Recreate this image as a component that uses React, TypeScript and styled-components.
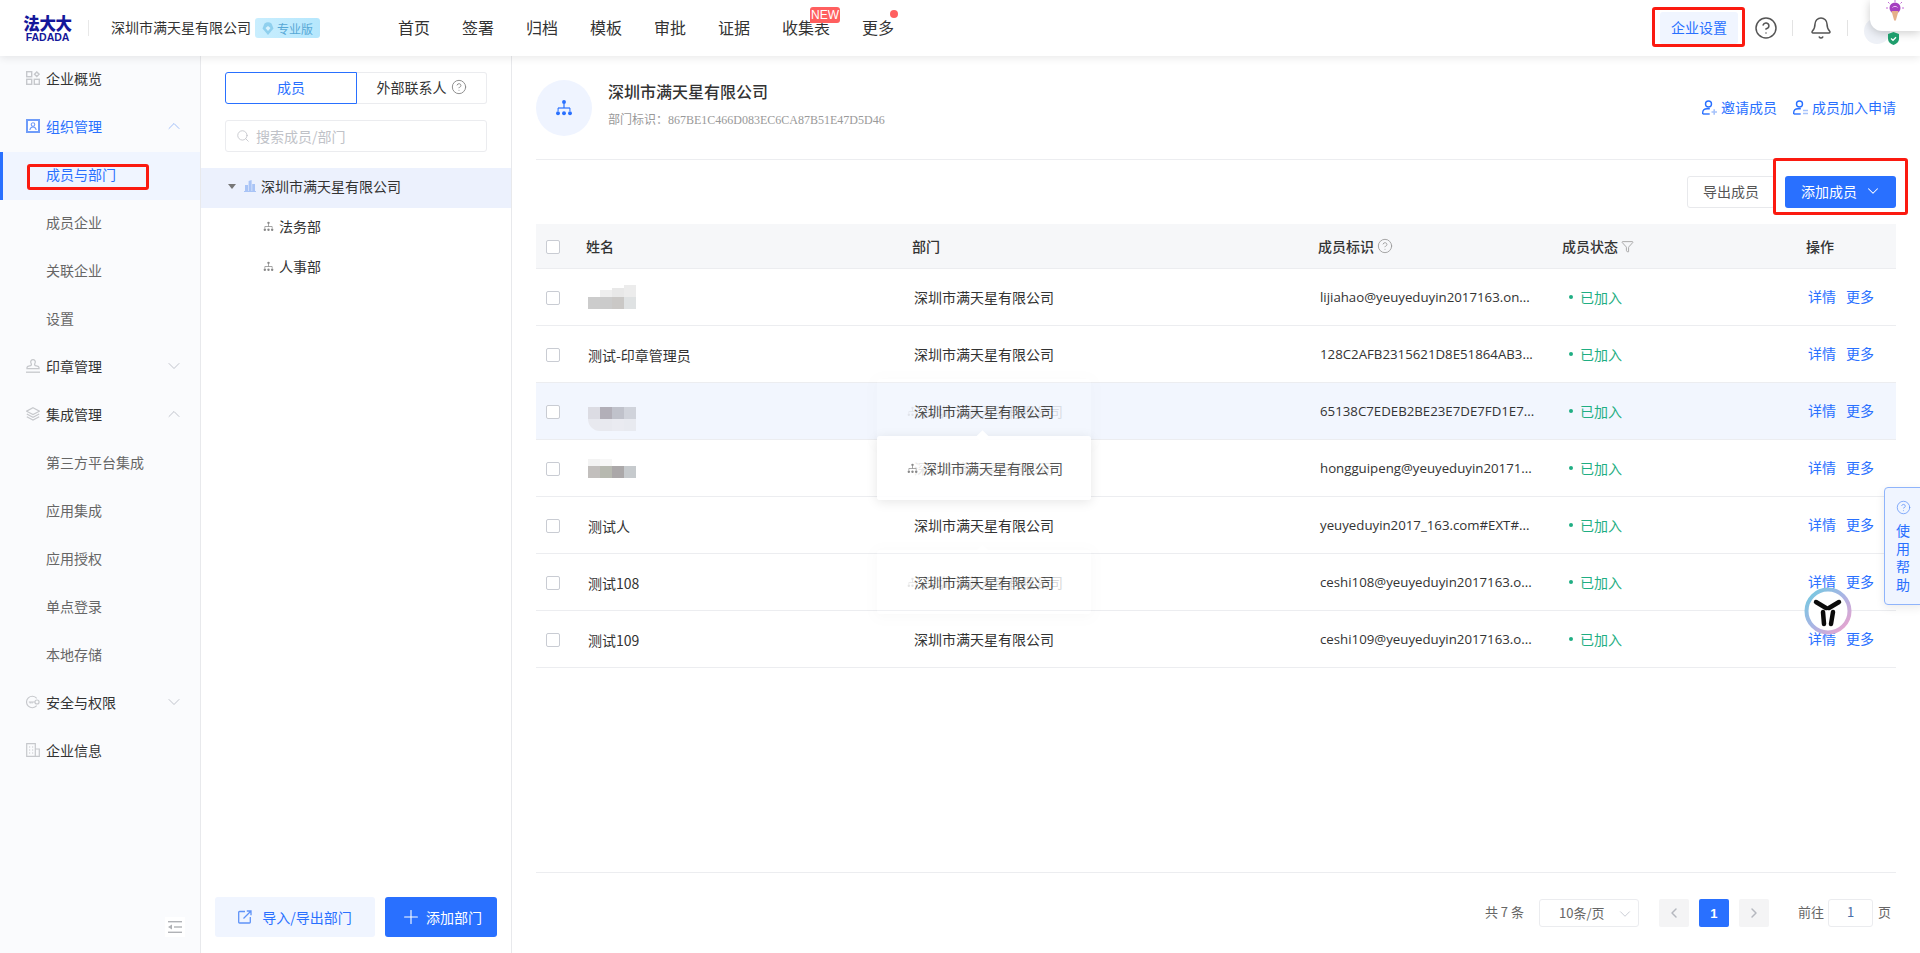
import React from 'react';
import styled, { createGlobalStyle } from 'styled-components';
import { Bell, ChevronDown, ChevronLeft, ChevronRight, ChevronUp, CircleHelp, Funnel, Plus, Search } from 'lucide-react';

const BLUE = '#2970ff';
const CJK = '"Noto Sans CJK SC", sans-serif';
const LATIN = '"Open Sans", "Noto Sans CJK SC", sans-serif';

const Global = createGlobalStyle`
  html, body { margin: 0; padding: 0; height: 100%; overflow: hidden; background: #fff; }
  #root { height: 100%; }
  * { box-sizing: border-box; }
  body { font-family: ${LATIN}; font-size: 14px; color: #333; }
`;

const Page = styled.div`
  position: relative;
  width: 1920px;
  height: 953px;
  display: flex;
  flex-direction: column;
  overflow: hidden;
`;

/* ---------- top bar ---------- */
const TopBar = styled.header`
  height: 56px;
  flex: none;
  display: flex;
  align-items: center;
  background: #fff;
  box-shadow: 0 2px 8px rgba(0, 0, 0, 0.09);
  position: relative;
  z-index: 3;
`;
const Logo = styled.div`
  width: 49px;
  margin-left: 23px;
  display: flex;
  flex-direction: column;
  align-items: center;
  color: #14179a;
  font-family: ${CJK};
`;
const LogoCn = styled.span`
  font-size: 16.5px;
  font-weight: 900;
  line-height: 17px;
  letter-spacing: -0.3px;
  white-space: nowrap;
`;
const LogoEn = styled.span`
  font-family: "Liberation Sans", sans-serif;
  font-size: 10.5px;
  font-weight: 700;
  line-height: 8px;
  margin-top: 1px;
  white-space: nowrap;
`;
const LogoSep = styled.span`
  width: 1px;
  height: 16px;
  background: #e8e8e8;
  margin: 0 22px 0 16px;
`;
const CompanyName = styled.span`
  font-family: ${CJK};
  font-size: 14px;
  color: #333;
  white-space: nowrap;
  margin-bottom: 2px;
`;
const PlanBadge = styled.span`
  margin-left: 4px;
  width: 65px;
  height: 20px;
  border-radius: 3px;
  background: linear-gradient(90deg, #c9eefe, #b5e7fd);
  display: flex;
  align-items: center;
  justify-content: center;
  gap: 3px;
  color: #57a8d6;
  font-family: ${CJK};
  font-size: 12px;
`;
const Nav = styled.nav`
  margin-left: 78px;
  margin-bottom: 2px;
  display: flex;
  gap: 32px;
`;
const NavItem = styled.span`
  position: relative;
  font-family: ${CJK};
  font-size: 16px;
  line-height: 24px;
  color: #333;
  white-space: nowrap;
`;
const NewTag = styled.span`
  position: absolute;
  left: 28px;
  top: -8px;
  width: 30px;
  height: 16px;
  background: #ff5f5f;
  border-radius: 3px 3px 3px 0;
  color: #fff;
  font-family: "Liberation Sans", sans-serif;
  font-size: 12px;
  line-height: 16px;
  text-align: center;
`;
const RedDot = styled.span`
  position: absolute;
  right: -4px;
  top: -5px;
  width: 8px;
  height: 8px;
  border-radius: 50%;
  background: #ff5f5f;
`;
const TopTools = styled.div`
  margin-left: auto;
  display: flex;
  align-items: center;
  height: 100%;
`;
const SettingsButton = styled.span`
  width: 78px;
  height: 32px;
  border-radius: 3px;
  background: #f0f5ff;
  color: ${BLUE};
  font-family: ${CJK};
  font-size: 14px;
  line-height: 31px;
  text-align: center;
`;
const ToolIcon = styled.span<{ $gap: number }>`
  display: flex;
  color: #555;
  margin-left: ${p => p.$gap}px;
`;
const ToolSep = styled.span`
  width: 1px;
  height: 16px;
  margin-left: 14px;
  background: #e3e3e3;
`;
const Avatar = styled.span`
  width: 26px;
  height: 26px;
  border-radius: 50%;
  background: #eef1f7;
  margin: 6px 0 0 16px;
`;
const AvatarRow = styled.div`
  width: 72px;
  display: flex;
  align-items: center;
`;
const TipCard = styled.div`
  position: absolute;
  right: 0;
  top: 0;
  width: 50px;
  height: 31px;
  background: #fff;
  border-radius: 0 0 0 12px;
  box-shadow: 0 2px 10px rgba(0, 0, 0, 0.2);
  display: flex;
  justify-content: center;
  z-index: 4;
`;
const ShieldMark = styled.span`
  position: absolute;
  left: 1887px;
  top: 32px;
  display: flex;
  z-index: 4;
`;

/* ---------- body ---------- */
const Body = styled.div`
  flex: 1;
  display: flex;
  min-height: 0;
`;
const Side = styled.aside`
  width: 201px;
  flex: none;
  background: #fafbfd;
  border-right: 1px solid #e8e9ec;
  position: relative;
`;
const SideRow = styled.div<{ $active?: boolean; $top?: boolean; $open?: boolean }>`
  height: 48px;
  display: flex;
  align-items: center;
  padding: 0 0 5px 26px;
  position: relative;
  font-family: ${CJK};
  font-size: 14px;
  color: ${p => (p.$active || p.$open ? BLUE : p.$top ? '#333' : '#666')};
  background: ${p => (p.$active ? '#f0f5ff' : 'transparent')};
  ${p => (p.$active ? `border-left: 3px solid ${BLUE}; padding-left: 23px;` : '')}
`;
const SideIcon = styled.span`
  width: 14px;
  height: 14px;
  margin-right: 6px;
  display: flex;
  flex: none;
`;
const SideGap = styled.span`
  width: 20px;
  flex: none;
`;
const SideChevron = styled.span<{ $open?: boolean }>`
  position: absolute;
  left: 164px;
  top: 12px;
  display: flex;
  color: ${p => (p.$open ? '#8fb2f8' : '#b4b8c2')};
`;
const CollapseBox = styled.span`
  position: absolute;
  left: 165px;
  bottom: 16px;
  width: 20px;
  height: 20px;
  background: #fff;
  display: flex;
  align-items: center;
  justify-content: center;
`;

/* ---------- department tree ---------- */
const TreePanel = styled.section`
  width: 311px;
  flex: none;
  border-right: 1px solid #e8e9ec;
  display: flex;
  flex-direction: column;
  padding-top: 16px;
  background: #fff;
`;
const Tabs = styled.div`
  margin: 0 24px;
  height: 32px;
  display: flex;
  font-family: ${CJK};
  font-size: 14px;
`;
const TabOn = styled.div`
  width: 132px;
  height: 32px;
  border: 1px solid ${BLUE};
  border-radius: 3px 0 0 3px;
  color: ${BLUE};
  text-align: center;
  line-height: 29px;
`;
const TabOff = styled.div`
  flex: 1;
  height: 32px;
  border: 1px solid #ebecef;
  border-left: none;
  border-radius: 0 3px 3px 0;
  color: #333;
  display: flex;
  align-items: center;
  justify-content: center;
  gap: 4px;
  padding-bottom: 2px;
`;
const SearchBox = styled.div`
  margin: 16px 24px;
  height: 32px;
  border: 1px solid #ebecef;
  border-radius: 3px;
  display: flex;
  align-items: center;
  padding-left: 10px;
  gap: 6px;
  color: #c0c2c8;
  font-family: ${CJK};
  font-size: 14px;
`;
const TreeRow = styled.div<{ $on?: boolean; $child?: boolean }>`
  height: 40px;
  display: flex;
  align-items: center;
  padding: 0 0 4px ${p => (p.$child ? '62px' : '27px')};
  background: ${p => (p.$on ? '#ecf1fd' : 'transparent')};
  font-family: ${CJK};
  font-size: 14px;
  color: #333;
`;
const TreeLabel = styled.span<{ $gap: number }>`
  margin-left: ${p => p.$gap}px;
`;
const Caret = styled.span`
  width: 0;
  height: 0;
  border-left: 4px solid transparent;
  border-right: 4px solid transparent;
  border-top: 5px solid #777;
  margin-right: 8px;
`;
const TreeFoot = styled.div`
  margin-top: auto;
  padding: 0 14px 16px;
  display: flex;
  gap: 10px;
  font-family: ${CJK};
  font-size: 14px;
`;
const ImportBtn = styled.div`
  width: 160px;
  height: 40px;
  background: #f0f5ff;
  border-radius: 3px;
  color: ${BLUE};
  display: flex;
  align-items: center;
  justify-content: center;
  gap: 10px;
`;
const AddDeptBtn = styled.div`
  width: 112px;
  height: 40px;
  background: ${BLUE};
  border-radius: 3px;
  color: #fff;
  display: flex;
  align-items: center;
  justify-content: center;
  gap: 4px;
`;

/* ---------- main ---------- */
const Main = styled.main`
  flex: 1;
  min-width: 0;
  padding: 0 24px;
  display: flex;
  flex-direction: column;
`;
const DeptHead = styled.div`
  height: 104px;
  flex: none;
  padding-top: 24px;
  border-bottom: 1px solid #ecedf0;
  display: flex;
`;
const DeptCircle = styled.div`
  width: 56px;
  height: 56px;
  border-radius: 50%;
  background: #eff4ff;
  display: flex;
  align-items: center;
  justify-content: center;
  margin-right: 16px;
`;
const DeptText = styled.div`
  display: flex;
  flex-direction: column;
  margin-top: -1px;
`;
const DeptTitle = styled.div`
  font-family: ${CJK};
  font-size: 16px;
  font-weight: 500;
  color: #333;
  line-height: 24px;
`;
const DeptId = styled.div`
  margin-top: 9px;
  font-family: "Liberation Serif", "Noto Sans CJK SC", serif;
  font-size: 12px;
  line-height: 16px;
  color: #999;
  white-space: nowrap;
`;
const DeptLinks = styled.div`
  margin-left: auto;
  padding-top: 17px;
  display: flex;
  gap: 16px;
  font-family: ${CJK};
  font-size: 14px;
  color: ${BLUE};
`;
const DeptLink = styled.span`
  display: flex;
  align-items: center;
  gap: 4px;
  height: 20px;
`;
const ActionBar = styled.div`
  height: 64px;
  flex: none;
  display: flex;
  align-items: center;
  justify-content: flex-end;
  gap: 10px;
  font-family: ${CJK};
  font-size: 14px;
`;
const ExportBtn = styled.div`
  width: 88px;
  height: 32px;
  border: 1px solid #e8e9ec;
  border-radius: 3px;
  color: #555;
  text-align: center;
  line-height: 29px;
`;
const AddBtn = styled.div`
  width: 111px;
  height: 32px;
  border-radius: 3px;
  background: ${BLUE};
  color: #fff;
  display: flex;
  align-items: center;
  justify-content: center;
  gap: 7px;
  padding: 0 0 2px 2px;
`;

const COLS = '50px 326px 406px 243px 245px 90px';
const Table = styled.div`
  position: relative;
  flex: none;
`;
const HeadRow = styled.div`
  height: 45px;
  display: grid;
  grid-template-columns: ${COLS};
  align-items: center;
  background: #f6f7f9;
  border-bottom: 1px solid #ecedf0;
  font-family: ${CJK};
  font-size: 14px;
  font-weight: 500;
  color: #333;
`;
const HeadCell = styled.div<{ $shift?: number }>`
  display: flex;
  align-items: center;
  gap: 3px;
  color: #333;
  margin-left: ${p => p.$shift ?? 0}px;
`;
const HelpGlyph = styled.span`
  display: flex;
  color: #999;
`;
const Row = styled.div<{ $hover?: boolean }>`
  height: 57px;
  display: grid;
  grid-template-columns: ${COLS};
  align-items: center;
  background: ${p => (p.$hover ? '#f2f6fe' : '#fff')};
  border-bottom: 1px solid #ecedf0;
  font-size: 14px;
  color: #333;
`;
const Cell = styled.div`
  padding-left: 2px;
  white-space: nowrap;
  color: #333;
  font-family: ${CJK};
`;
const NameCell = styled(Cell)`
  margin-top: 2px;
`;
const IdCell = styled(Cell)`
  font-family: ${LATIN};
  font-size: 13.25px;
  letter-spacing: 0;
`;
const CheckCell = styled.div`
  padding: 2px 0 0 10px;
  display: flex;
`;
const Check = styled.span`
  width: 14px;
  height: 14px;
  border: 1px solid #c9ccd3;
  border-radius: 2px;
  background: #fff;
`;
const Status = styled.div`
  padding-left: 8px;
  display: flex;
  align-items: center;
  gap: 7px;
  color: #1fae83;
  font-family: ${CJK};
`;
const StatusDot = styled.span`
  width: 4px;
  height: 4px;
  border-radius: 50%;
  background: #1fae83;
`;
const Ops = styled.div`
  padding-left: 2px;
  display: flex;
  gap: 10px;
  margin-top: -3px;
  color: ${BLUE};
  font-family: ${CJK};
`;

const Popover = styled.div<{ $top: number; $fade: number }>`
  position: absolute;
  left: 341px;
  top: ${p => p.$top}px;
  width: 214px;
  height: 64px;
  padding-left: 30px;
  display: flex;
  align-items: center;
  gap: 5px;
  background: rgba(255, 255, 255, 0.88);
  border-radius: 3px;
  box-shadow: 0 2px 12px rgba(0, 0, 0, 0.1);
  opacity: ${p => p.$fade};
  font-family: ${CJK};
  font-size: 14px;
  color: #555;
  white-space: nowrap;
  pointer-events: none;
`;
const PopArrow = styled.span`
  position: absolute;
  left: 101px;
  top: -4px;
  width: 9px;
  height: 9px;
  background: #fff;
  transform: rotate(45deg);
`;

const Pager = styled.div`
  margin-top: auto;
  height: 81px;
  flex: none;
  border-top: 1px solid #ecedf0;
  display: flex;
  align-items: flex-start;
  justify-content: flex-end;
  padding: 26px 5px 0 0;
  font-family: ${CJK};
  font-size: 13px;
  color: #666;
`;
const PagerLabel = styled.span<{ $gap?: number; $lead?: number }>`
  line-height: 26px;
  margin-right: ${p => p.$gap ?? 0}px;
  margin-left: ${p => p.$lead ?? 0}px;
  white-space: nowrap;
`;
const PageSize = styled.div`
  width: 100px;
  height: 28px;
  border: 1px solid #ebecef;
  border-radius: 3px;
  margin-right: 20px;
  padding: 0 0 2px 19px;
  display: flex;
  align-items: center;
  color: #666;
  position: relative;
`;
const PageSizeIcon = styled.span`
  position: absolute;
  right: 4px;
  top: 5px;
  display: flex;
  color: #c0c4cc;
`;
const PageBtn = styled.div<{ $on?: boolean }>`
  width: 30px;
  height: 28px;
  margin-right: 10px;
  border-radius: 2px;
  background: ${p => (p.$on ? BLUE : '#f4f4f5')};
  color: ${p => (p.$on ? '#fff' : '#b5b8bf')};
  font-family: "Liberation Sans", sans-serif;
  font-weight: 700;
  font-size: 13px;
  display: flex;
  align-items: center;
  justify-content: center;
`;
const PageJump = styled.div`
  width: 45px;
  height: 28px;
  margin: 0 5px 0 4px;
  border: 1px solid #ebecef;
  border-radius: 3px;
  text-align: center;
  line-height: 24px;
  color: #4a6fa8;
`;

/* ---------- floating and annotation layers ---------- */
const HelpTab = styled.div`
  position: absolute;
  left: 1884px;
  top: 487px;
  width: 40px;
  height: 118px;
  padding: 12px 0 0 11px;
  background: #f0f5ff;
  border: 1px solid #8fb4fb;
  border-radius: 4px;
  box-shadow: 0 3px 10px rgba(0, 0, 0, 0.08);
  color: ${BLUE};
  font-family: ${CJK};
  font-size: 14px;
  line-height: 18px;
  display: flex;
  flex-direction: column;
  z-index: 2;
`;
const HelpWord = styled.span`
  margin-top: 6px;
  width: 14px;
  word-break: break-all;
`;
const RoundLogo = styled.div`
  position: absolute;
  left: 1804px;
  top: 587px;
  width: 48px;
  height: 48px;
  display: flex;
  z-index: 2;
`;
const Annotation = styled.div<{ $x: number; $y: number; $w: number; $h: number }>`
  position: absolute;
  left: ${p => p.$x}px;
  top: ${p => p.$y}px;
  width: ${p => p.$w}px;
  height: ${p => p.$h}px;
  border: 3px solid #fb1a10;
  border-radius: 3px;
  z-index: 5;
  pointer-events: none;
`;

/* ---------- drawings ---------- */
const OrgIcon = ({ size = 12, color = '#888' }: { size?: number; color?: string }) => (
  <svg width={size} height={size} viewBox="0 0 12 12" fill={color}>
    <circle cx="6" cy="2" r="1.3" />
    <rect x="5.6" y="3" width=".8" height="3" />
    <rect x="2" y="5.6" width="8" height=".8" />
    <rect x="1.7" y="6" width=".7" height="2" />
    <rect x="9.6" y="6" width=".7" height="2" />
    <circle cx="2" cy="9.5" r="1.3" />
    <circle cx="6" cy="9.5" r="1.3" />
    <circle cx="10" cy="9.5" r="1.3" />
  </svg>
);
const IconOverview = () => (
  <svg width="14" height="14" viewBox="0 0 14 14" fill="none" stroke="#c6c8cc" strokeWidth="1.4">
    <rect x=".7" y=".7" width="5" height="5" />
    <rect x=".7" y="8.3" width="5" height="5" />
    <rect x="8.3" y="8.3" width="5" height="5" />
    <path d="M10.8.9l2.3 2.3-2.3 2.3-2.3-2.3z" />
  </svg>
);
const IconOrg = () => (
  <svg width="14" height="14" viewBox="0 0 14 14">
    <rect y="0" width="14" height="14" fill="#6f9cf9" />
    <rect x="2" y="2" width="10" height="10" fill="#fff" />
    <circle cx="7" cy="5.6" r="1.8" fill="none" stroke="#6f9cf9" strokeWidth="1.1" />
    <path d="M3.8 11c.4-2 1.6-3 3.2-3s2.8 1 3.2 3" fill="none" stroke="#6f9cf9" strokeWidth="1.1" />
  </svg>
);
const IconSeal = () => (
  <svg width="14" height="14" viewBox="0 0 14 14" fill="none" stroke="#c6c8cc" strokeWidth="1.3">
    <path d="M5 6.5c1-1 .2-2-.2-3C4.3 2 5.4.7 7 .7s2.7 1.3 2.2 2.8c-.4 1-1.2 2 -.2 3 .6.6 4 .4 4 2v1.2H1V8.500c0-1.600 3.400-1.400 4-2z" />
    <path d="M0 13.200h14" />
  </svg>
);
const IconLayers = () => (
  <svg width="14" height="14" viewBox="0 0 14 14" fill="none" stroke="#c6c8cc" strokeWidth="1.2">
    <path d="M7 .8L13.400 4.200 7 7.600.6 4.200z" />
    <path d="M.8 7L7 10.300 13.200 7" />
    <path d="M.8 9.700L7 13 13.200 9.700" />
  </svg>
);
const IconKey = () => (
  <svg width="15" height="14" viewBox="0 0 15 14" fill="none" stroke="#c6c8cc" strokeWidth="1.2">
    <path d="M11.500 3A6.200 6.200 0 1 0 11.500 11" />
    <circle cx="11.800" cy="7" r="2.200" />
    <path d="M3 7h6.500M4.500 7v1.500M6.500 7v1.500" />
  </svg>
);
const IconBuilding = () => (
  <svg width="14" height="14" viewBox="0 0 14 14" fill="none" stroke="#c6c8cc" strokeWidth="1.200">
    <path d="M.7 13.300V.7h8.600v12.600zM9.300 6h4v7.300h-4" />
    <path d="M3 4h1.200M6 4h1.200M3 7h1.200M6 7h1.200M3 10h1.200M6 10h1.200" />
  </svg>
);
const IconCollapse = () => (
  <svg width="14" height="12" viewBox="0 0 14 12" fill="#b0b2b6">
    <rect width="14" height="1.400" />
    <rect x="6" y="5.300" width="8" height="1.400" />
    <rect y="10.600" width="14" height="1.400" />
    <path d="M4 3.500v5L0 6z" />
  </svg>
);
const IconBank = () => (
  <svg width="12" height="12" viewBox="0 0 12 12" fill="#a9c4f6">
    <path d="M0 11h12v1H0zM1 5h3v6H1zM4.600 1L7.600 0v11h-3zM8.200 4H11v7H8.200z" />
  </svg>
);
const IconExternal = () => (
  <svg width="14" height="14" viewBox="0 0 14 14" fill="none" stroke="#5f93f8" strokeWidth="1.300">
    <path d="M7 1.500H1.500a.8.800 0 0 0-.8.800v9.900c0 .5.300.8.800.8h10c.5 0 .8-.3.8-.8V7" />
    <path d="M5.500 8.500L12.500 1.500M8.800 1h4.200v4.200" />
  </svg>
);
const IconInvite = ({ minus }: { minus?: boolean }) => (
  <svg width="15" height="15" viewBox="0 0 15 15" fill="none">
    <circle cx="6.500" cy="4" r="3" stroke={BLUE} strokeWidth="1.400" />
    <path d="M.7 14v-1.200c0-2.500 2-4 4.500-4h2.600" stroke={BLUE} strokeWidth="1.400" />
    <path d="M.7 14h7" stroke={BLUE} strokeWidth="1.400" />
    {minus ? (
      <path d="M10 10.500h5M10 13.500h5" stroke="#a7c3fb" strokeWidth="1.400" />
    ) : (
      <path d="M9.500 12h5.500M12.200 9.300v5.500" stroke="#a7c3fb" strokeWidth="1.600" />
    )}
  </svg>
);
const IconDiamond = () => (
  <svg width="12" height="14" viewBox="0 0 12 14" fill="#8fd0ee">
    <path d="M6 14L.5 7.500 2.500 2.500a6 6 0 0 1 7 0l2 5z" />
    <path d="M6 10L3.500 7l2.500-2 2.500 2z" fill="#d9f3fe" />
  </svg>
);

const MosaicSvg = styled.svg<{ $top: number; $round?: boolean }>`
  display: block;
  margin-top: ${p => p.$top}px;
  border-radius: ${p => (p.$round ? '0 0 0 12px' : '0')};
`;
type Cellish = [number, number, string];
const Mosaic = ({ w, h, cells, top, round }: { w: number; h: number; cells: Cellish[]; top: number; round?: boolean }) => (
  <MosaicSvg width={w} height={h} viewBox={`0 0 ${w} ${h}`} $top={top} $round={round}>
    {cells.map(([x, y, c], i) => (
      <rect key={i} x={x} y={y} width="12" height="12" fill={c} />
    ))}
  </MosaicSvg>
);
const m1: Cellish[] = [
  [12, 5, '#eeeeee'], [24, 3, '#e8e8e8'], [36, 0, '#ececec'],
  [0, 12, '#cccccc'], [12, 12, '#cbcbcb'], [24, 12, '#cac8c6'], [36, 12, '#dfe2e3'],
];
const m3: Cellish[] = [
  [0, 0, '#dcdce3'], [12, 0, '#b2afb8'], [24, 0, '#c0c2cb'], [36, 0, '#d0d3db'],
  [0, 12, '#e8e9ef'], [12, 12, '#e8e9ef'], [24, 12, '#eaebf1'], [36, 12, '#e8eaf0'],
];
const m4: Cellish[] = [
  [0, 0, '#f3f3f3'], [12, 0, '#f7f7f7'],
  [0, 7, '#c2bfbd'], [12, 7, '#b7b9b0'], [24, 7, '#aba8a9'], [36, 7, '#c6cacd'],
];

const rows: { name?: string; mosaic?: React.ReactNode; id: string; hover?: boolean }[] = [
  { mosaic: <Mosaic w={48} h={24} cells={m1} top={-2} />, id: 'lijiahao@yeuyeduyin2017163.on...' },
  { name: '测试-印章管理员', id: '128C2AFB2315621D8E51864AB3...' },
  { mosaic: <Mosaic w={48} h={24} cells={m3} top={13} round />, id: '65138C7EDEB2BE23E7DE7FD1E7...', hover: true },
  { mosaic: <Mosaic w={48} h={19} cells={m4} top={-2} />, id: 'hongguipeng@yeuyeduyin20171...' },
  { name: '测试人', id: 'yeuyeduyin2017_163.com#EXT#...' },
  { name: '测试108', id: 'ceshi108@yeuyeduyin2017163.o...' },
  { name: '测试109', id: 'ceshi109@yeuyeduyin2017163.o...' },
];

const side: { label: string; icon?: React.ReactNode; chevron?: 'up' | 'down'; open?: boolean; active?: boolean }[] = [
  { label: '企业概览', icon: <IconOverview /> },
  { label: '组织管理', icon: <IconOrg />, chevron: 'up', open: true },
  { label: '成员与部门', active: true },
  { label: '成员企业' },
  { label: '关联企业' },
  { label: '设置' },
  { label: '印章管理', icon: <IconSeal />, chevron: 'down' },
  { label: '集成管理', icon: <IconLayers />, chevron: 'up' },
  { label: '第三方平台集成' },
  { label: '应用集成' },
  { label: '应用授权' },
  { label: '单点登录' },
  { label: '本地存储' },
  { label: '安全与权限', icon: <IconKey />, chevron: 'down' },
  { label: '企业信息', icon: <IconBuilding /> },
];

const nav = ['首页', '签署', '归档', '模板', '审批', '证据', '收集表', '更多'];

export default function App() {
  return (
    <Page>
      <Global />
      <TopBar>
        <Logo>
          <LogoCn>法大大</LogoCn>
          <LogoEn>FADADA</LogoEn>
        </Logo>
        <LogoSep />
        <CompanyName>深圳市满天星有限公司</CompanyName>
        <PlanBadge>
          <IconDiamond />
          专业版
        </PlanBadge>
        <Nav>
          {nav.map(n => (
            <NavItem key={n}>
              {n}
              {n === '收集表' && <NewTag>NEW</NewTag>}
              {n === '更多' && <RedDot />}
            </NavItem>
          ))}
        </Nav>
        <TopTools>
          <SettingsButton>企业设置</SettingsButton>
          <ToolIcon $gap={16}>
            <CircleHelp size={24} strokeWidth={1.5} />
          </ToolIcon>
          <ToolSep />
          <ToolIcon $gap={16}>
            <Bell size={24} strokeWidth={1.5} />
          </ToolIcon>
          <ToolSep />
          <AvatarRow>
            <Avatar />
          </AvatarRow>
        </TopTools>
      </TopBar>
      <TipCard>
        <svg width="20" height="23" viewBox="0 0 20 23">
          <g stroke="#c26bd6" strokeWidth="1">
            <path d="M10 0v2M3 2l1.500 1.500M17 2l-1.500 1.500M1 8h2M17 8h2" />
          </g>
          <circle cx="10" cy="8" r="5.500" fill="#a53fc0" />
          <path d="M6.500 11h7l-2.500 9c-.3 1-1.700 1-2 0z" fill="#e6b08a" />
          <path d="M7.500 7.500c1-1.500 4-1.500 5 0" fill="none" stroke="#f0c9f5" strokeWidth="1" />
        </svg>
      </TipCard>
      <ShieldMark>
        <svg width="13" height="13" viewBox="0 0 13 13">
          <path d="M6.500 0l5.500 2v5c0 3-2.500 5-5.500 6C3.500 12 1 10 1 7V2z" fill="#1f9e6d" />
          <path d="M4 6.500l2 1.800 3-3" fill="none" stroke="#fff" strokeWidth="1.300" />
        </svg>
      </ShieldMark>

      <Body>
        <Side>
          {side.map(s => (
            <SideRow key={s.label} $active={s.active} $open={s.open} $top={!!s.icon}>
              {s.icon ? <SideIcon>{s.icon}</SideIcon> : <SideGap />}
              {s.label}
              {s.chevron && (
                <SideChevron $open={s.open}>
                  {s.chevron === 'up' ? <ChevronUp size={20} strokeWidth={1} /> : <ChevronDown size={20} strokeWidth={1} />}
                </SideChevron>
              )}
            </SideRow>
          ))}
          <CollapseBox>
            <IconCollapse />
          </CollapseBox>
        </Side>

        <TreePanel>
          <Tabs>
            <TabOn>成员</TabOn>
            <TabOff>
              外部联系人
              <HelpGlyph>
                <CircleHelp size={16} strokeWidth={1.4} color="#888" />
              </HelpGlyph>
            </TabOff>
          </Tabs>
          <SearchBox>
            <Search size={14} strokeWidth={1.4} />
            搜索成员/部门
          </SearchBox>
          <TreeRow $on>
            <Caret />
            <IconBank />
            <TreeLabel $gap={5}>深圳市满天星有限公司</TreeLabel>
          </TreeRow>
          <TreeRow $child>
            <OrgIcon size={11} />
            <TreeLabel $gap={5}>法务部</TreeLabel>
          </TreeRow>
          <TreeRow $child>
            <OrgIcon size={11} />
            <TreeLabel $gap={5}>人事部</TreeLabel>
          </TreeRow>
          <TreeFoot>
            <ImportBtn>
              <IconExternal />
              导入/导出部门
            </ImportBtn>
            <AddDeptBtn>
              <Plus size={22} strokeWidth={1.2} />
              添加部门
            </AddDeptBtn>
          </TreeFoot>
        </TreePanel>

        <Main>
          <DeptHead>
            <DeptCircle>
              <OrgIcon size={18} color={BLUE} />
            </DeptCircle>
            <DeptText>
              <DeptTitle>深圳市满天星有限公司</DeptTitle>
              <DeptId>部门标识：867BE1C466D083EC6CA87B51E47D5D46</DeptId>
            </DeptText>
            <DeptLinks>
              <DeptLink>
                <IconInvite />
                邀请成员
              </DeptLink>
              <DeptLink>
                <IconInvite minus />
                成员加入申请
              </DeptLink>
            </DeptLinks>
          </DeptHead>
          <ActionBar>
            <ExportBtn>导出成员</ExportBtn>
            <AddBtn>
              添加成员
              <ChevronDown size={18} strokeWidth={1.4} />
            </AddBtn>
          </ActionBar>
          <Table>
            <HeadRow>
              <CheckCell>
                <Check />
              </CheckCell>
              <HeadCell>姓名</HeadCell>
              <HeadCell>部门</HeadCell>
              <HeadCell>
                成员标识
                <HelpGlyph>
                  <CircleHelp size={16} strokeWidth={1.3} />
                </HelpGlyph>
              </HeadCell>
              <HeadCell $shift={1}>
                成员状态
                <HelpGlyph>
                  <Funnel size={13} strokeWidth={1.5} />
                </HelpGlyph>
              </HeadCell>
              <HeadCell>操作</HeadCell>
            </HeadRow>
            {rows.map(r => (
              <Row key={r.id} $hover={r.hover}>
                <CheckCell>
                  <Check />
                </CheckCell>
                <NameCell>{r.mosaic ?? r.name}</NameCell>
                <Cell>深圳市满天星有限公司</Cell>
                <IdCell>{r.id}</IdCell>
                <Status>
                  <StatusDot />
                  已加入
                </Status>
                <Ops>
                  <span>详情</span>
                  <span>更多</span>
                </Ops>
              </Row>
            ))}
            <Popover $top={155} $fade={0.16}>
              <OrgIcon size={11} />
              深圳市满天星有限公司
            </Popover>
            <Popover $top={212} $fade={1}>
              <PopArrow />
              <OrgIcon size={11} />
              深圳市满天星有限公司
            </Popover>
            <Popover $top={326} $fade={0.22}>
              <PopArrow />
              <OrgIcon size={11} />
              深圳市满天星有限公司
            </Popover>
          </Table>
          <Pager>
            <PagerLabel $gap={15}>共 7 条</PagerLabel>
            <PageSize>
              10条/页
              <PageSizeIcon>
                <ChevronDown size={18} strokeWidth={1.1} />
              </PageSizeIcon>
            </PageSize>
            <PageBtn>
              <ChevronLeft size={16} strokeWidth={2.2} />
            </PageBtn>
            <PageBtn $on>1</PageBtn>
            <PageBtn>
              <ChevronRight size={16} strokeWidth={2.2} />
            </PageBtn>
            <PagerLabel $lead={19}>前往</PagerLabel>
            <PageJump>1</PageJump>
            <PagerLabel>页</PagerLabel>
          </Pager>
        </Main>
      </Body>

      <HelpTab>
        <CircleHelp size={15} strokeWidth={1.2} color="#5f93f8" />
        <HelpWord>使用帮助</HelpWord>
      </HelpTab>
      <RoundLogo>
        <svg width="48" height="48" viewBox="0 0 48 48">
          <defs>
            <linearGradient id="ring" x1="0" y1="0" x2="1" y2="1">
              <stop offset="0" stopColor="#6fcbe0" />
              <stop offset="0.5" stopColor="#a9b4e4" />
              <stop offset="1" stopColor="#f3a1cb" />
            </linearGradient>
          </defs>
          <circle cx="24" cy="24" r="21.500" fill="#fff" stroke="url(#ring)" strokeWidth="4" />
          <g stroke="#0b0b0b" strokeWidth="4.500" strokeLinecap="round" fill="none">
            <path d="M12 15l10 6M35 15l-10 6M19 25l1 12M29 25l-2 12" />
          </g>
        </svg>
      </RoundLogo>

      <Annotation $x={1652} $y={7} $w={93} $h={40} />
      <Annotation $x={1773} $y={158} $w={135} $h={57} />
      <Annotation $x={27} $y={164} $w={122} $h={26} />
    </Page>
  );
}
